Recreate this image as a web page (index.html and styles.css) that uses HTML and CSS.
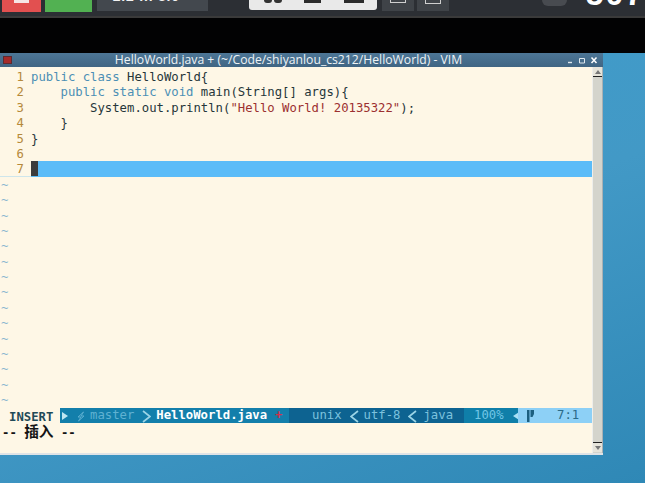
FILE: index.html
```html
<!DOCTYPE html>
<html lang="en">
<head>
<meta charset="utf-8">
<title>HelloWorld.java - VIM</title>
<link rel="stylesheet" href="styles.css">
</head>
<body>
<div class="screen">
  <header class="topbar">
    <div class="tb-red"><span class="tb-red-mark"></span></div>
    <div class="tb-green"></div>
    <div class="tb-grey"><span class="tb-label">2.2 in 3.0</span></div>
    <div class="tb-white">
      <span class="tb-dot"></span><span class="tb-dot"></span>
      <span class="tb-block tb-block-a"></span>
      <span class="tb-block tb-block-b"></span>
    </div>
    <div class="tb-small"><span class="tb-bracket"></span></div>
    <div class="tb-small tb-small-b"><span class="tb-box"></span></div>
    <div class="tb-circle"></div>
    <div class="tb-big">507</div>
  </header>
  <div class="band"></div>
  <main class="desktop">
    <section class="window">
      <div class="titlebar">
        <span class="win-icon"></span>
        <span class="win-title">HelloWorld.java + (~/Code/shiyanlou_cs212/HelloWorld) - VIM</span>
        <span class="win-controls">
          <svg width="30" height="10" viewBox="0 0 30 10"><path d="M0 7.500h4" stroke="#dfe8ee" stroke-width="1.400" fill="none"/><path d="M11.500 3.500h5v4.500h-5z" stroke="#dfe8ee" fill="none"/><path d="M23.500 2.500l5 5.500M28.500 2.500l-5 5.500" stroke="#fff" stroke-width="1.500" fill="none"/></svg>
        </span>
      </div>
      <div class="client">
        <div class="editor">
          <div class="buffer">
            <div class="line"><span class="num">1</span><span class="code"><span class="kw">public class</span> HelloWorld{</span></div>
            <div class="line"><span class="num">2</span><span class="code">    <span class="kw">public static void</span> main(String[] args){</span></div>
            <div class="line"><span class="num">3</span><span class="code">        System.out.println(<span class="str">"Hello World! 20135322"</span>);</span></div>
            <div class="line"><span class="num">4</span><span class="code">    }</span></div>
            <div class="line"><span class="num">5</span><span class="code">}</span></div>
            <div class="line"><span class="num">6</span><span class="code"></span></div>
            <div class="line line-current"><span class="num">7</span><span class="code"><span class="cursor"></span></span></div>
            <div class="tilde">~</div><div class="tilde">~</div><div class="tilde">~</div>
            <div class="tilde">~</div><div class="tilde">~</div><div class="tilde">~</div>
            <div class="tilde">~</div><div class="tilde">~</div><div class="tilde">~</div>
            <div class="tilde">~</div><div class="tilde">~</div><div class="tilde">~</div>
            <div class="tilde">~</div><div class="tilde">~</div><div class="tilde">~</div>
          </div>
          <div class="status">
            <span class="st-mode">INSERT</span>
            <span class="st-branch">
              <svg class="st-play" width="6" height="8" viewBox="0 0 6 8"><path d="M0 0l6 4-6 4z" fill="#bfe6f2"/></svg>
              <svg class="st-bolt" width="8" height="11" viewBox="0 0 8 11"><path d="M6.500 1L1 6h3l-2.500 4L7 5H4z" fill="none" stroke="#5aaed0"/></svg>
              <span class="st-master">master</span>
              <svg class="st-chev" width="9" height="13" viewBox="0 0 9 13"><path d="M1 1l7 5.500-7 5.500" fill="none" stroke="#9ad4e6" stroke-width="1.700"/></svg>
              <span class="st-file">HelloWorld.java</span>
              <span class="st-mod">+</span>
            </span>
            <span class="st-info">
              <span class="st-unix">unix</span>
              <svg class="st-chev-l" width="9" height="13" viewBox="0 0 9 13"><path d="M8 1L1 6.500l7 5.500" fill="none" stroke="#9ad4e6" stroke-width="1.700"/></svg>
              <span class="st-enc">utf-8</span>
              <svg class="st-chev-l" width="9" height="13" viewBox="0 0 9 13"><path d="M8 1L1 6.500l7 5.500" fill="none" stroke="#9ad4e6" stroke-width="1.700"/></svg>
              <span class="st-type">java</span>
            </span>
            <span class="st-pct"><span>100%</span><svg class="st-tri" width="6" height="8" viewBox="0 0 6 8"><path d="M6 0L0 4l6 4z" fill="#a8e0f5"/></svg></span>
            <span class="st-pos">
              <svg class="st-flag" width="7" height="12" viewBox="0 0 7 12"><path d="M0 0h2.500v12H0zM3.500 0H7v4L5.500 7H3.500z" fill="#1c5f80"/></svg>
              <span class="st-lc">7:1</span>
            </span>
          </div>
          <div class="cmd">-- <span class="cjk">插入</span> --</div>
        </div>
        <aside class="scrollbar">
          <div class="sb-btn sb-up"><svg width="6" height="4" viewBox="0 0 6 4"><path d="M3 0l3 4H0z" fill="#777"/></svg></div>
          <div class="sb-btn sb-down"><svg width="6" height="4" viewBox="0 0 6 4"><path d="M3 4L0 0h6z" fill="#777"/></svg></div>
        </aside>
      </div>
    </section>
  </main>
</div>
</body>
</html>
```
FILE: styles.css
```css
* { box-sizing: border-box; }
html, body { margin: 0; padding: 0; background: #000; }
body { width: 645px; height: 483px; overflow: hidden; }
.screen { width: 645px; height: 483px; display: flex; flex-direction: column; overflow: hidden; }

.topbar { height: 18px; flex: none; display: flex; align-items: flex-start; background: #2c2f34; border-bottom: 2px solid #3a3a3a; overflow: hidden; }
.tb-red { width: 39px; height: 12px; margin-left: 2px; background: #e25050; display: flex; justify-content: center; }
.tb-red-mark { width: 15px; height: 3px; background: #f6e6e6; }
.tb-green { width: 47px; height: 12px; margin-left: 4px; background: #52b152; }
.tb-grey { width: 112px; height: 11px; margin-left: 5px; background: #43484e; overflow: hidden; padding-left: 16px; }
.tb-label { display: block; margin-top: -10px; font: bold 14px/13px "Liberation Sans", sans-serif; color: #f2f2f2; letter-spacing: 0.8px; white-space: nowrap; }
.tb-white { width: 128px; height: 10px; margin-left: 41px; background: #e9e9e9; border-radius: 0 0 3px 3px; display: flex; align-items: flex-start; padding-left: 15px; }
.tb-dot { width: 8px; height: 3px; margin-right: 2px; background: #333; border-radius: 0 0 3px 3px; }
.tb-block { height: 3px; background: #2b2b2b; }
.tb-block-a { width: 17px; margin-left: 20px; }
.tb-block-b { width: 20px; margin-left: 23px; }
.tb-small { width: 32px; height: 11px; margin-left: 5px; background: #3f4348; display: flex; justify-content: center; }
.tb-small-b { margin-left: 3px; }
.tb-bracket { width: 16px; height: 3px; border: 1px solid #cfcfcf; border-top: 0; }
.tb-box { width: 16px; height: 4px; border: 1px solid #cfcfcf; border-top: 0; }
.tb-circle { width: 25px; height: 6px; margin-left: 93px; background: #484b50; border-radius: 0 0 13px 13px; }
.tb-big { margin-left: 19px; margin-top: -19px; font: bold 32px/26px "Liberation Sans", sans-serif; color: #fff; letter-spacing: 2px; white-space: nowrap; }

.band { height: 35px; flex: none; background: #020203; }

.desktop { flex: 1; background: linear-gradient(160deg, #3f9dcc 0%, #4299c6 50%, #2f88b6 100%); }
.window { width: 603px; height: 402px; display: flex; flex-direction: column; background: #dfe3e6; }

.titlebar { height: 14px; flex: none; position: relative; display: flex; align-items: center; justify-content: center; background: linear-gradient(#4d7696, #406583); }
.win-icon { position: absolute; left: 3px; top: 3px; width: 9px; height: 8px; background: #a52a2a; border: 1px solid #5d2a30; }
.win-title { font: 12.2px/14px "Open Sans", sans-serif; color: #eef3f6; white-space: nowrap; margin-right: 26px; }
.win-controls { position: absolute; right: 5px; top: 2px; height: 10px; display: flex; }

.client { flex: 1; display: flex; min-height: 0; padding-bottom: 2px; }
.editor { width: 592px; flex: none; background: #fef7e6; padding-top: 2px; font: 12.28px/15.4px "DejaVu Sans Mono", monospace; color: #26363a; }
.line { height: 15.4px; display: flex; white-space: pre; line-height: 17.4px; }
.num { width: 24px; flex: none; text-align: right; color: #b5893a; }
.code { margin-left: 7px; flex: 1; white-space: pre; }
.kw { color: #4c8fb5; }
.str { color: #9c3030; }
.line-current { background: linear-gradient(#fef7e6, #fef7e6) left / 31px 100% no-repeat, #5bbcf8; }
.cursor { display: block; width: 7px; height: 15px; background: #3c3c3c; }
.tilde { height: 15.4px; padding-left: 1px; color: #8cb6d0; line-height: 17.4px; }

.status { height: 15px; display: flex; white-space: pre; padding-left: 2px; }
.st-mode { width: 58px; flex: none; padding-left: 7px; padding-top: 2px; font-weight: bold; color: #1f4a58; }
.st-branch { width: 229px; flex: none; display: flex; align-items: center; background: #137fab; color: #60b2d2; padding-top: 2px; }
.st-play { margin-left: 2px; }
.st-bolt { margin-left: 9px; }
.st-master { margin-left: 5px; }
.st-chev { margin-left: 8px; }
.st-file { margin-left: 5px; font-weight: bold; color: #fff; }
.st-mod { margin-left: 8px; font-weight: bold; color: #d1304a; }
.st-info { width: 175px; flex: none; display: flex; align-items: center; background: #0d6391; color: #7cc2de; padding-left: 23px; padding-top: 2px; }
.st-chev-l { margin-left: 8px; }
.st-enc { margin-left: 5px; }
.st-type { margin-left: 6px; }
.st-pct { width: 54px; flex: none; display: flex; align-items: center; background: #0f7fa9; color: #72c6e6; padding-left: 10px; padding-top: 2px; }
.st-tri { margin-left: 9px; }
.st-pos { flex: 1; display: flex; align-items: center; background: #8dd0f6; color: #2a6a88; padding-left: 9px; padding-top: 2px; }
.st-lc { margin-left: 23px; }

.cmd { height: 15.4px; padding-left: 2px; font-weight: bold; color: #141414; white-space: pre; }
.cjk { font: bold 14.7px/15px "Noto Sans CJK SC", sans-serif; }

.scrollbar { flex: 1; display: flex; flex-direction: column; justify-content: space-between; background: #d4d4cc; border-left: 1px solid #eeeeea; border-right: 1px solid #a9b0b3; }
.sb-btn { height: 10px; display: flex; align-items: center; justify-content: center; background: #e6e4da; }
.sb-up { border-bottom: 1px solid #222; }
.sb-down { border-top: 1px solid #222; margin-bottom: 1px; }
```
